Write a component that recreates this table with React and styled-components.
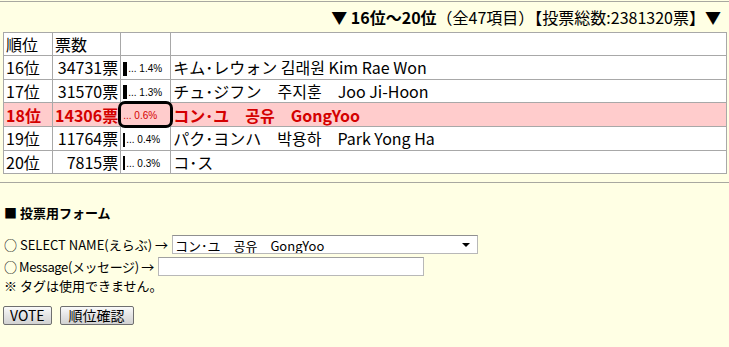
import React from "react";
import styled, { createGlobalStyle, css } from "styled-components";

const GlobalStyle = createGlobalStyle`
  html, body {
    margin: 0;
    padding: 0;
    background: #ffffe4;
  }
  body {
    font-family: "Noto Sans CJK JP", "Liberation Sans", sans-serif;
    color: #000;
  }
`;

const ranks = [
  { rank: 16, votes: 34731, bar: 4, pct: "1.4%", name: "キム･レウォン 김래원 Kim Rae Won" },
  { rank: 17, votes: 31570, bar: 4, pct: "1.3%", name: "チュ･ジフン　주지훈　Joo Ji-Hoon" },
  { rank: 18, votes: 14306, bar: 0, pct: "0.6%", name: "コン･ユ　공유　GongYoo", mine: true },
  { rank: 19, votes: 11764, bar: 2, pct: "0.4%", name: "パク･ヨンハ　박용하　Park Yong Ha" },
  { rank: 20, votes: 7815, bar: 2, pct: "0.3%", name: "コ･ス" },
];

const Page = styled.div`
  border-top: 1px solid #a8a8a0;
  margin-top: 1px;
`;

const TitleBar = styled.div`
  height: 30px;
  display: flex;
  align-items: center;
  justify-content: flex-end;
  padding-right: 8px;
  font-size: 16px;
  white-space: nowrap;
`;

const Strong = styled.b`
  font-weight: 700;
`;

const Ranking = styled.table`
  margin: 0 2px 0 3px;
  width: calc(100% - 5px);
  border-collapse: collapse;
  background: #fff;
  font-size: 16px;
`;

const Row = styled.tr`
  ${(p) =>
    p.$mine &&
    css`
      background: #ffcccc;
      color: #d40000;
      font-weight: 700;
    `}
`;

const Cell = styled.td`
  border: 1px solid #a8a8a8;
  height: 22px;
  padding: 0 2px;
  line-height: 20px;
  white-space: nowrap;
  text-align: ${(p) => (p.$right ? "right" : "left")};
  width: ${(p) => p.$w || "auto"};
  vertical-align: middle;
`;

const BarCell = styled(Cell)`
  position: relative;
  padding: 0 2px;
  font-weight: 400;
  ${(p) =>
    p.$ring &&
    css`
      &::after {
        content: "";
        position: absolute;
        left: -3px;
        top: -2px;
        right: -3px;
        bottom: -2px;
        border: 3px solid #000;
        border-radius: 7px;
      }
    `}
`;

const Bar = styled.span`
  display: inline-block;
  vertical-align: middle;
  height: 14px;
  background: #000;
  margin-right: 1px;
`;

const Pct = styled.span`
  font-family: "Liberation Sans", sans-serif;
  font-size: 10px;
  vertical-align: middle;
`;

const Rule = styled.div`
  border-top: 1px solid #a8a8a0;
  margin-top: 8px;
`;

const Form = styled.form`
  padding: 22px 3px 0 4px;
  font-size: 13px;
`;

const Heading = styled.div`
  font-weight: 700;
  font-size: 13px;
  line-height: 16px;
  margin-bottom: 14px;
`;

const Line = styled.div`
  display: flex;
  align-items: center;
  gap: 4px;
  height: 19px;
  line-height: 19px;
  margin-bottom: ${(p) => (p.$last ? 0 : 3)}px;
  white-space: nowrap;
`;

const Label = styled.span`
  letter-spacing: ${(p) => p.$tight || 0}px;
`;

const SelectWrap = styled.div`
  position: relative;
  width: 306px;
  height: 19px;
`;

const Select = styled.select`
  appearance: none;
  width: 100%;
  height: 19px;
  box-sizing: border-box;
  border: 1px solid #b8b8b8;
  border-top-color: #909090;
  background: #fff;
  font: 13px "Noto Sans CJK JP", sans-serif;
  padding: 0 2px;
  color: #000;
`;

const Arrow = styled.span`
  position: absolute;
  right: 8px;
  top: 8px;
  width: 0;
  height: 0;
  border-left: 4px solid transparent;
  border-right: 4px solid transparent;
  border-top: 4px solid #000;
  pointer-events: none;
`;

const TextInput = styled.input`
  width: 266px;
  height: 19px;
  box-sizing: border-box;
  border: 1px solid #b8b8b8;
  border-top-color: #a0a0a0;
  background: #fff;
`;

const Note = styled.div`
  line-height: 19px;
  height: 19px;
`;

const Buttons = styled.div`
  display: flex;
  gap: 8px;
  margin-top: 11px;
  margin-left: -1px;
`;

const Button = styled.button`
  height: 19px;
  min-width: ${(p) => p.$w}px;
  padding: 0 6px;
  font: 14px "Noto Sans CJK JP", sans-serif;
  line-height: 15px;
  border: 1px solid #6f6f6f;
  border-radius: 2px;
  background: linear-gradient(#fafafa, #e4e4e4 50%, #d2d2d2);
  color: #000;
`;

export default function App() {
  return (
    <Page>
      <GlobalStyle />
      <TitleBar>
        <Strong>▼ 16位～20位</Strong>（全47項目）【投票総数:2381320票】<Strong>▼</Strong>
      </TitleBar>
      <Ranking>
        <tbody>
          <Row>
            <Cell $w="44px">順位</Cell>
            <Cell $w="62px">票数</Cell>
            <Cell $w="45px"></Cell>
            <Cell></Cell>
          </Row>
          {ranks.map((r) => (
            <Row key={r.rank} $mine={r.mine}>
              <Cell>{r.rank}位</Cell>
              <Cell $right>{r.votes}票</Cell>
              <BarCell $ring={r.mine}>
                {r.bar > 0 && <Bar style={{ width: r.bar }} />}
                <Pct>... {r.pct}</Pct>
              </BarCell>
              <Cell>{r.name}</Cell>
            </Row>
          ))}
        </tbody>
      </Ranking>
      <Rule />
      <Form onSubmit={(e) => e.preventDefault()}>
        <Heading>■ 投票用フォーム</Heading>
        <Line>
          <Label>○ SELECT NAME(えらぶ) →</Label>
          <SelectWrap>
            <Select defaultValue="gongyoo">
              <option value="gongyoo">コン･ユ　공유　GongYoo</option>
            </Select>
            <Arrow />
          </SelectWrap>
        </Line>
        <Line $last>
          <Label $tight={-0.4}>○ Message(メッセージ) →</Label>
          <TextInput type="text" />
        </Line>
        <Note>※ タグは使用できません。</Note>
        <Buttons>
          <Button $w={46}>VOTE</Button>
          <Button $w={74}>順位確認</Button>
        </Buttons>
      </Form>
    </Page>
  );
}
